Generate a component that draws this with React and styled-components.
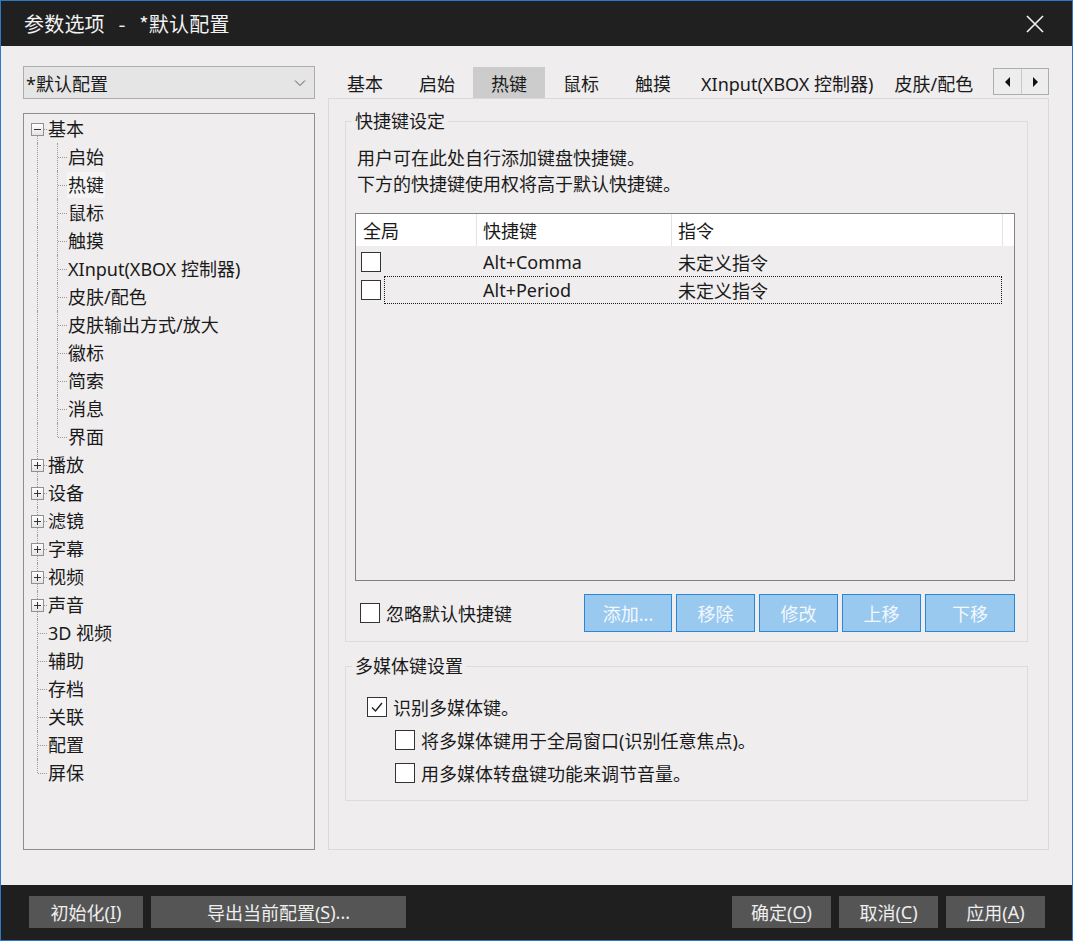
import React from 'react'
import styled, { createGlobalStyle } from 'styled-components'

const FONT = `"Noto Sans", "Noto Sans CJK SC", sans-serif`

const GlobalStyle = createGlobalStyle`
  html, body { margin: 0; padding: 0; background: #1f1f1f; }
  body { font-family: ${FONT}; font-size: 18px; color: #1a1a1a; }
  * { box-sizing: border-box; }
`

const treeItems = [
  { label: '基本', level: 0, box: 'minus', v: 'bottom' },
  { label: '启始', level: 1 },
  { label: '热键', level: 1, selected: true },
  { label: '鼠标', level: 1 },
  { label: '触摸', level: 1 },
  { label: 'XInput(XBOX 控制器)', level: 1 },
  { label: '皮肤/配色', level: 1 },
  { label: '皮肤输出方式/放大', level: 1 },
  { label: '徽标', level: 1 },
  { label: '简索', level: 1 },
  { label: '消息', level: 1 },
  { label: '界面', level: 1, last: true },
  { label: '播放', level: 0, box: 'plus' },
  { label: '设备', level: 0, box: 'plus' },
  { label: '滤镜', level: 0, box: 'plus' },
  { label: '字幕', level: 0, box: 'plus' },
  { label: '视频', level: 0, box: 'plus' },
  { label: '声音', level: 0, box: 'plus' },
  { label: '3D 视频', level: 0 },
  { label: '辅助', level: 0 },
  { label: '存档', level: 0 },
  { label: '关联', level: 0 },
  { label: '配置', level: 0 },
  { label: '屏保', level: 0, v: 'top' },
]

const tabs = [
  { label: '基本' },
  { label: '启始' },
  { label: '热键', active: true },
  { label: '鼠标' },
  { label: '触摸' },
  { label: 'XInput(XBOX 控制器)', pad: [12, 3] },
  { label: '皮肤/配色' },
]

const hotkeys = [
  { key: 'Alt+Comma', cmd: '未定义指令' },
  { key: 'Alt+Period', cmd: '未定义指令', focused: true },
]

const Check = ({ checked }) => (
  <CheckBox>
    {checked && (
      <svg width="14" height="14" viewBox="0 0 14 14">
        <path d="M2 7.5 L5.5 11 L12 3" fill="none" stroke="#222" strokeWidth="1.4" />
      </svg>
    )}
  </CheckBox>
)

const Expander = ({ type }) => (
  <ExpBox>
    <svg width="11" height="11" viewBox="0 0 11 11">
      <path d="M2 5.5 H9" stroke="#333" strokeWidth="1" />
      {type === 'plus' && <path d="M5.5 2 V9" stroke="#333" strokeWidth="1" />}
    </svg>
  </ExpBox>
)

const TreeRow = ({ item }) => (
  <Row>
    {item.level === 0 ? (
      <Guide v={item.v || 'full'} h>
        {item.box && <Expander type={item.box} />}
      </Guide>
    ) : (
      <>
        <Guide v="full" />
        <Guide v={item.last ? 'top' : 'full'} h />
      </>
    )}
    <TreeLabel selected={item.selected}>{item.label}</TreeLabel>
  </Row>
)

const App = () => {
  return (
    <>
      <GlobalStyle />
      <Window>
        <TitleBar>
          <Title>参数选项 - *默认配置</Title>
          <CloseButton>
            <svg width="18" height="18" viewBox="0 0 18 18">
              <path d="M1 1 L17 17 M17 1 L1 17" stroke="#f2f2f2" strokeWidth="1.6" />
            </svg>
          </CloseButton>
        </TitleBar>

        <Body>
          <LeftColumn>
            <Dropdown>
              <span>*默认配置</span>
              <svg width="12" height="8" viewBox="0 0 12 8">
                <path d="M1 1.5 L6 6.5 L11 1.5" fill="none" stroke="#555" strokeWidth="1" />
              </svg>
            </Dropdown>
            <TreeBox>
              {treeItems.map((item) => (
                <TreeRow key={item.label} item={item} />
              ))}
            </TreeBox>
          </LeftColumn>

          <RightColumn>
            <TabStrip>
              <TabList>
                {tabs.map((t) => (
                  <Tab key={t.label} active={t.active} pad={t.pad}>{t.label}</Tab>
                ))}
              </TabList>
              <ScrollBox>
                <ScrollBtn>
                  <svg width="6" height="10" viewBox="0 0 6 10"><path d="M5 0 L0 5 L5 10 Z" fill="#111" /></svg>
                </ScrollBtn>
                <ScrollBtn>
                  <svg width="6" height="10" viewBox="0 0 6 10"><path d="M1 0 L6 5 L1 10 Z" fill="#111" /></svg>
                </ScrollBtn>
              </ScrollBox>
            </TabStrip>

            <Panel>
              <Group>
                <Legend>快捷键设定</Legend>
                <Desc>
                  用户可在此处自行添加键盘快捷键。<br />
                  下方的快捷键使用权将高于默认快捷键。
                </Desc>
                <ListBox>
                  <ListHeader>
                    <HeadCell>全局</HeadCell>
                    <HeadCell>快捷键</HeadCell>
                    <HeadCell>指令</HeadCell>
                    <HeadCell last />
                  </ListHeader>
                  <ListRows>
                    {hotkeys.map((h) => (
                      <HotRow key={h.key}>
                        <CheckCell><Check /></CheckCell>
                        <FocusArea focused={h.focused}>
                          <span />
                          <Cell>{h.key}</Cell>
                          <Cell>{h.cmd}</Cell>
                        </FocusArea>
                      </HotRow>
                    ))}
                  </ListRows>
                </ListBox>
                <Toolbar>
                  <CheckLabel indent={5}>
                    <Check />
                    <span>忽略默认快捷键</span>
                  </CheckLabel>
                  <Buttons>
                    <BlueButton w={88}>添加...</BlueButton>
                    <BlueButton w={79}>移除</BlueButton>
                    <BlueButton w={79}>修改</BlueButton>
                    <BlueButton w={79}>上移</BlueButton>
                    <BlueButton w={90}>下移</BlueButton>
                  </Buttons>
                </Toolbar>
              </Group>

              <Group second>
                <Legend>多媒体键设置</Legend>
                <OptionList>
                  <CheckLabel indent={12}>
                    <Check checked />
                    <span>识别多媒体键。</span>
                  </CheckLabel>
                  <CheckLabel indent={40}>
                    <Check />
                    <span>将多媒体键用于全局窗口(识别任意焦点)。</span>
                  </CheckLabel>
                  <CheckLabel indent={40}>
                    <Check />
                    <span>用多媒体转盘键功能来调节音量。</span>
                  </CheckLabel>
                </OptionList>
              </Group>
            </Panel>
          </RightColumn>
        </Body>

        <BottomBar>
          <DarkButton w={114}>初始化(<u>I</u>)</DarkButton>
          <DarkButton w={255}>导出当前配置(<u>S</u>)...</DarkButton>
          <Spacer />
          <DarkButton w={99}>确定(<u>O</u>)</DarkButton>
          <DarkButton w={99}>取消(<u>C</u>)</DarkButton>
          <DarkButton w={99}>应用(<u>A</u>)</DarkButton>
        </BottomBar>
      </Window>
    </>
  )
}

export default App

const Window = styled.div`
  width: 1073px;
  height: 941px;
  border: 1px solid #2b79c9;
  display: flex;
  flex-direction: column;
  background: #efedee;
  overflow: hidden;
`

const TitleBar = styled.div`
  height: 45px;
  flex-shrink: 0;
  background: #202020;
  color: #f2f2f2;
  display: flex;
  align-items: center;
  justify-content: space-between;
  padding-left: 23px;
`

const Title = styled.div`
  font-family: "Noto Sans CJK SC", sans-serif;
  font-size: 20px;
  letter-spacing: 0.2px;
  word-spacing: 9px;
`

const CloseButton = styled.div`
  width: 74px;
  height: 45px;
  display: flex;
  align-items: center;
  justify-content: center;
`

const Body = styled.div`
  flex: 1;
  display: flex;
  gap: 13px;
  padding: 20px 23px 35px 22px;
  min-height: 0;
`

const LeftColumn = styled.div`
  width: 292px;
  display: flex;
  flex-direction: column;
  gap: 14px;
`

const Dropdown = styled.div`
  height: 33px;
  border: 1px solid #adadad;
  background: #e5e5e5;
  display: flex;
  align-items: center;
  justify-content: space-between;
  padding: 0 8px 0 2px;
`

const TreeBox = styled.div`
  flex: 1;
  border: 1px solid #8e8e8e;
  padding: 1px 0 0 3px;
`

const Row = styled.div`
  height: 28px;
  display: flex;
  align-items: center;
`

const Guide = styled.div`
  position: relative;
  width: 20px;
  height: 28px;
  flex-shrink: 0;

  &::before {
    content: '';
    position: absolute;
    left: 10px;
    top: ${(p) => (p.v === 'bottom' ? '14px' : '0')};
    bottom: ${(p) => (p.v === 'top' ? '14px' : '0')};
    border-left: 1px dotted #9a9a9a;
  }

  &::after {
    content: '';
    display: ${(p) => (p.h ? 'block' : 'none')};
    position: absolute;
    left: 11px;
    right: 0;
    top: 14px;
    border-top: 1px dotted #9a9a9a;
  }
`

const ExpBox = styled.div`
  position: absolute;
  left: 4px;
  top: 8px;
  width: 13px;
  height: 13px;
  z-index: 1;
  border: 1px solid #919191;
  background: linear-gradient(#ffffff, #e4e4e4);
  display: flex;
  align-items: center;
  justify-content: center;
`

const TreeLabel = styled.span`
  padding: 0 1px;
  line-height: 26px;
  white-space: nowrap;
  background: ${(p) => (p.selected ? '#f6f5f6' : 'transparent')};
`

const RightColumn = styled.div`
  flex: 1;
  display: flex;
  flex-direction: column;
  min-width: 0;
`

const TabStrip = styled.div`
  height: 31px;
  margin-top: 1px;
  display: flex;
  flex-shrink: 0;
`

const TabList = styled.div`
  flex: 1;
  display: flex;
  overflow: hidden;
  padding-left: 1px;
  min-width: 0;
`

const Tab = styled.div`
  flex-shrink: 0;
  height: 31px;
  padding: ${(p) => (p.pad ? `0 ${p.pad[1]}px 0 ${p.pad[0]}px` : '0 18px')};
  display: flex;
  align-items: center;
  white-space: nowrap;
  background: ${(p) => (p.active ? '#cccccc' : 'transparent')};
`

const ScrollBox = styled.div`
  display: flex;
  margin-top: 1px;
  height: 27px;
  border: 1px solid #adadad;
  background: #ededed;
`

const ScrollBtn = styled.div`
  width: 27px;
  display: flex;
  align-items: center;
  justify-content: center;
  & + & { border-left: 1px solid #c8c8c8; }
`

const Panel = styled.div`
  flex: 1;
  border: 1px solid #dadada;
  padding: 11px 20px 0 16px;
`

const Group = styled.fieldset`
  margin: ${(p) => (p.second ? '13px 0 0' : '0')};
  border: 1px solid #dcdcdc;
  padding: 0 12px ${(p) => (p.second ? '11px' : '9px')} 9px;
  min-width: 0;
`

const Legend = styled.legend`
  padding: 0 3px;
  margin-left: -3px;
  line-height: 22px;
`

const Desc = styled.div`
  margin-top: 13px;
  padding-left: 2px;
  line-height: 26px;
`

const ListBox = styled.div`
  margin-top: 16px;
  height: 368px;
  border: 1px solid #828282;
`

const ListHeader = styled.div`
  display: grid;
  grid-template-columns: 121px 195px 331px 1fr;
  height: 32px;
  background: #ffffff;
`

const HeadCell = styled.div`
  display: flex;
  align-items: center;
  padding-left: ${(p) => (p.last ? 0 : '6px')};
  border-right: ${(p) => (p.last ? 'none' : '1px solid #e3e3e3')};
  &:first-child { padding-left: 7px; }
`

const ListRows = styled.div`
  padding-top: 2px;
`

const HotRow = styled.div`
  display: grid;
  grid-template-columns: 28px 618px;
  height: 28px;
`

const CheckCell = styled.div`
  display: flex;
  align-items: center;
  padding-left: 5px;
`

const FocusArea = styled.div`
  display: grid;
  grid-template-columns: 92px 195px 1fr;
  border: 1px dotted ${(p) => (p.focused ? '#1a1a1a' : 'transparent')};
`

const Cell = styled.div`
  display: flex;
  align-items: center;
  padding-left: 6px;
  white-space: nowrap;
`

const CheckBox = styled.span`
  width: 20px;
  height: 20px;
  flex-shrink: 0;
  border: 1px solid #333333;
  background: #ffffff;
  display: inline-flex;
  align-items: center;
  justify-content: center;
`

const CheckLabel = styled.label`
  display: flex;
  align-items: center;
  gap: 6px;
  height: 33px;
  padding-left: ${(p) => p.indent}px;
  white-space: nowrap;
`

const Toolbar = styled.div`
  margin-top: 13px;
  height: 38px;
  display: flex;
  align-items: center;
`

const Buttons = styled.div`
  margin-left: auto;
  display: flex;
  gap: 4px;
`

const BlueButton = styled.div`
  width: ${(p) => p.w}px;
  height: 38px;
  border: 1px solid #2c86d4;
  background: #99c9ef;
  color: #f3f8fd;
  display: flex;
  align-items: center;
  justify-content: center;
`

const OptionList = styled.div`
  margin-top: 13px;
  display: flex;
  flex-direction: column;
`

const BottomBar = styled.div`
  height: 55px;
  flex-shrink: 0;
  background: #1f1f1f;
  display: flex;
  align-items: center;
  gap: 8px;
  padding: 0 27px 2px 28px;
`

const Spacer = styled.div`
  flex: 1;
`

const DarkButton = styled.div`
  width: ${(p) => p.w}px;
  height: 32px;
  background: #555555;
  color: #eeeeee;
  display: flex;
  align-items: center;
  justify-content: center;
  white-space: nowrap;
  u { text-underline-offset: 3px; }
`
